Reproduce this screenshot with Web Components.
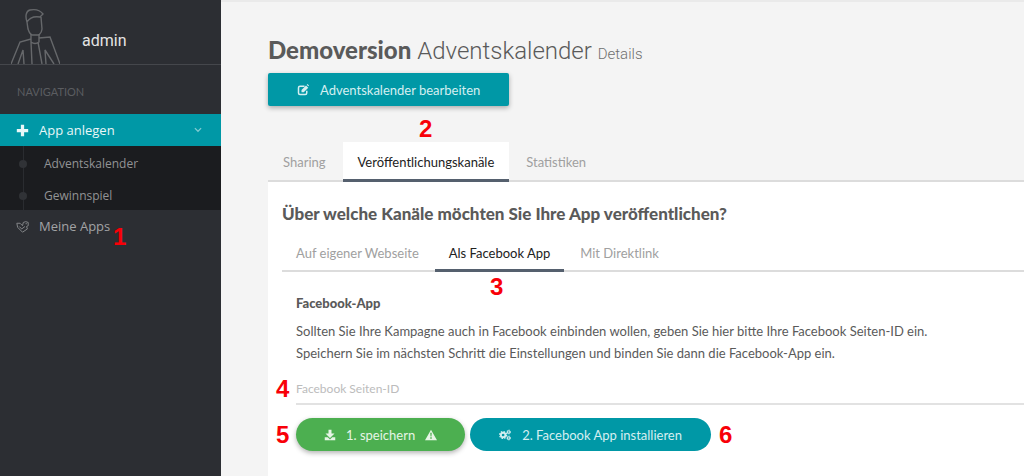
<!DOCTYPE html>
<html lang="de">
<head>
<meta charset="utf-8">
<meta name="viewport" content="width=device-width, initial-scale=1">
<title>Adventskalender</title>
<style>
  :root {
    --teal: #0098a6;
    --green: #4caf50;
    --slate: #55606e;
    --dark: #2c2e33;
    --darker: #1b1c1f;
    --text: #5a5a5a;
    --muted: #a0a0a0;
    --line: #dcdcdc;
  }

  body {
    margin: 0;
    background: #f4f4f4;
    color: var(--text);
    font-family: Lato, sans-serif;
    font-size: 13px;
  }
</style>
</head>
<body>
<admin-page></admin-page>

<script>
const define = (name, html) => {
  const template = document.createElement('template')
  template.innerHTML = html
  customElements.define(name, class extends HTMLElement {
    constructor() {
      super()
      this.attachShadow({ mode: 'open' }).append(template.content.cloneNode(true))
    }
  })
}

const icons = {
  plus: '<path d="M6 1h4v5h5v4h-5v5H6v-5H1V6h5z"/>',
  chevron: '<path d="M3 5l5 5 5-5" fill="none" stroke="currentColor" stroke-width="2"/>',
  tag: '<path d="M1 4l4 0 3 3 1-4 3-1 3 1 0 4-2 1 1 3-6 4-6-6z M4 8l3 3 4-3" fill="none" stroke="currentColor" stroke-width="1.2"/><circle cx="12.500" cy="4.500" r=".8"/>',
  edit: '<path d="M10 3H4Q2 3 2 5v7q0 2 2 2h7q2 0 2-2V9" fill="none" stroke="currentColor" stroke-width="2"/><path d="M6 8l6-6 3 3-6 6H6z"/><path d="M13 1l1-1 2 2-1 1z"/>',
  download: '<path d="M6 1h4v5h4l-6 6-6-6h4z"/><path d="M1 11h4l3 3 3-3h4v4H1z"/>',
  warning: '<path fill-rule="evenodd" d="M8 1l8 14H0zM7 5l.4 5h1.200L9 5zM7 11v2h2v-2z"/>',
  cogs: '<g fill="none" stroke="currentColor"><circle cx="5.500" cy="8" r="3" stroke-width="2.400"/><circle cx="5.500" cy="8" r="4.700" stroke-width="1.600" stroke-dasharray="2 1.690"/><circle cx="13" cy="4" r="1.700" stroke-width="1.500"/><circle cx="13" cy="4" r="2.700" stroke-width="1" stroke-dasharray="1.400 1.430"/><circle cx="13" cy="12" r="1.700" stroke-width="1.500"/><circle cx="13" cy="12" r="2.700" stroke-width="1" stroke-dasharray="1.400 1.430"/></g>'
}

class AppIcon extends HTMLElement {
  constructor() {
    super()
    this.attachShadow({ mode: 'open' })
  }

  connectedCallback() {
    this.shadowRoot.innerHTML = `
      <style>
        :host { display: inline-flex; width: 12px; height: 12px; flex: none; }
        svg { width: 100%; height: 100%; fill: currentColor; }
      </style>
      <svg viewBox="0 0 16 16" aria-hidden="true">${icons[this.getAttribute('name')]}</svg>
    `
  }
}

customElements.define('app-icon', AppIcon)

define('step-mark', `
  <style>
    :host {
      color: #f80008;
      font: bold 24px/24px "Liberation Sans", sans-serif;
    }
  </style>
  <slot></slot>
`)

define('user-badge', `
  <style>
    :host {
      display: flex;
      align-items: flex-end;
      gap: 22px;
      height: 64px;
      padding-left: 11px;
      border-bottom: 1px solid #45474c;
      color: #e4e4e4;
      font: 16px/20px Roboto, sans-serif;
    }
    svg {
      width: 49px;
      height: 56px;
      fill: none;
      stroke: #66686b;
      stroke-width: 1.4;
    }
    span { padding-bottom: 13px; }
  </style>
  <svg viewBox="0 0 49 56" aria-hidden="true">
    <path d="M16 14C14 8 15 3 19 2c5-1 10 0 13 4l-3 3c-6-1-10 0-13 5zM16 14l1 7c1 3 2 5 4 6h7c2-2 3-4 3-6L30 9"/>
    <path d="M20 26v8q4 3 8 0v-8M20 31L9 34 0 56M28 30l11-1 10 27M20 34l1 22M27 34l4 22M7 56l5-14 1 14M35 56l-1-14 9 14"/>
  </svg>
  <span><slot></slot></span>
`)

define('nav-item', `
  <style>
    :host { display: block; }
    a {
      display: flex;
      align-items: center;
      box-sizing: border-box;
      gap: 10px;
      height: 32px;
      padding: 0 18px 0 16px;
      color: #a2a3a5;
      text-decoration: none;
    }
    span { flex: 1; }
    :host([active]) a { background: var(--teal); color: #e9f7f8; }
    :host([sub]) a {
      gap: 17px;
      padding: 4px 18px 0 19px;
      color: #929395;
      font-size: 12px;
    }
    :host([sub]) a::before {
      content: "";
      width: 8px;
      height: 8px;
      border-radius: 50%;
      background: #303236;
    }
  </style>
  <a href="#"><slot name="icon"></slot><span><slot></slot></span><slot name="end"></slot></a>
`)

define('side-bar', `
  <style>
    :host {
      display: block;
      position: relative;
      background: var(--dark);
      font: 13px/20px "Open Sans", sans-serif;
    }
    h2 {
      margin: 0;
      padding: 17px 17px 12px;
      color: #5b5d61;
      font: 11px/20px Lato, sans-serif;
    }
    .sub {
      background: linear-gradient(#2a2c30, #2a2c30) 23px 0 / 1px 100% no-repeat var(--darker);
    }
    nav app-icon { width: 13px; height: 13px; }
    app-icon[name="tag"] { color: #85878a; }
    app-icon[name="chevron"] { width: 10px; height: 10px; color: #80cbd2; }
    step-mark {
      position: absolute;
      top: 225px;
      left: 113px;
    }
  </style>
  <user-badge>admin</user-badge>
  <h2>NAVIGATION</h2>
  <nav>
    <nav-item active><app-icon slot="icon" name="plus"></app-icon>App anlegen<app-icon slot="end" name="chevron"></app-icon></nav-item>
    <div class="sub">
      <nav-item sub>Adventskalender</nav-item>
      <nav-item sub>Gewinnspiel</nav-item>
    </div>
    <nav-item><app-icon slot="icon" name="tag"></app-icon>Meine Apps</nav-item>
  </nav>
  <step-mark>1</step-mark>
`)

define('action-button', `
  <style>
    :host { display: inline-flex; }
    button {
      display: flex;
      align-items: center;
      gap: 11px;
      height: 33px;
      padding: 0 29px;
      border: 0;
      border-radius: 2px;
      background: var(--teal);
      color: #d5eff1;
      font: 13px/20px Lato, sans-serif;
      cursor: pointer;
    }
    :host([raised]) button { box-shadow: 0 2px 5px rgba(0, 0, 0, .3); }
    :host([round]) button { border-radius: 17px; }
    :host([green]) button {
      gap: 10px;
      padding: 0 28px;
      background: var(--green);
      color: #e6f5e6;
    }
  </style>
  <button type="button"><slot></slot></button>
`)

define('tab-item', `
  <style>
    :host { display: block; }
    button {
      height: 100%;
      padding: 0 var(--tab-pad, 14px);
      border: 0;
      background: none;
      color: var(--muted);
      font: 13px/20px Lato, sans-serif;
      cursor: pointer;
    }
    :host([active]) button {
      background: #fff;
      color: #222;
      box-shadow: inset 0 -3px var(--slate);
    }
  </style>
  <button type="button" role="tab"><slot></slot></button>
`)

define('tab-bar', `
  <style>
    :host {
      display: flex;
      gap: 2px;
      height: 40px;
      box-shadow: inset 0 -2px var(--line);
    }
  </style>
  <slot></slot>
`)

define('facebook-form', `
  <style>
    :host { display: block; padding: 21px 0 14px 14px; }
    h4 { margin: 0; font: 900 13px/20px Lato, sans-serif; }
    p { margin: 7px 0 9px; line-height: 22px; }
    .field { position: relative; }
    .field step-mark { position: absolute; top: 4px; left: -20px; }
    input {
      display: block;
      box-sizing: border-box;
      width: 100%;
      height: 32px;
      padding: 0;
      border: 0;
      border-bottom: 2px solid #e2e2e2;
      background: none;
      font: 12px/20px Lato, sans-serif;
    }
    input::placeholder { color: #bcbcbc; opacity: 1; }
    .actions {
      position: relative;
      display: flex;
      align-items: center;
      gap: 5px;
      margin-top: 13px;
    }
    .actions step-mark:first-child { position: absolute; left: -20px; }
    .actions step-mark:last-child { margin-left: 3px; }
  </style>
  <h4>Facebook-App</h4>
  <p>Sollten Sie Ihre Kampagne auch in Facebook einbinden wollen, geben Sie hier bitte Ihre Facebook Seiten-ID ein.<br>Speichern Sie im nächsten Schritt die Einstellungen und binden Sie dann die Facebook-App ein.</p>
  <div class="field">
    <step-mark>4</step-mark>
    <input type="text" aria-label="Facebook Seiten-ID" placeholder="Facebook Seiten-ID">
  </div>
  <div class="actions">
    <step-mark>5</step-mark>
    <action-button round green raised><app-icon name="download"></app-icon>1. speichern<app-icon name="warning"></app-icon></action-button>
    <action-button round><app-icon name="cogs"></app-icon>2. Facebook App installieren</action-button>
    <step-mark>6</step-mark>
  </div>
`)

define('channel-panel', `
  <style>
    :host {
      display: block;
      flex: 1;
      padding: 20px 0 0 14px;
      background: #fff;
    }
    h3 { margin: 0 0 8px; font: 900 17px/24px Lato, sans-serif; }
    .tabs { position: relative; }
    tab-bar { height: 38px; }
    .tabs step-mark { position: absolute; top: 41px; left: 208px; }
  </style>
  <h3>Über welche Kanäle möchten Sie Ihre App veröffentlichen?</h3>
  <div class="tabs">
    <tab-bar role="tablist">
      <tab-item>Auf eigener Webseite</tab-item>
      <tab-item active>Als Facebook App</tab-item>
      <tab-item>Mit Direktlink</tab-item>
    </tab-bar>
    <step-mark>3</step-mark>
  </div>
  <facebook-form></facebook-form>
`)

define('admin-page', `
  <style>
    :host {
      display: grid;
      grid-template-columns: 221px 1fr;
      min-height: 100vh;
    }
    main {
      display: flex;
      flex-direction: column;
      padding: 33px 0 0 47px;
      border-top: 2px solid #eaeaea;
    }
    h1 {
      margin: 0 0 4px;
      font: 300 24px/30px Roboto, sans-serif;
    }
    h1 b { font-family: Lato, sans-serif; font-weight: 900; }
    h1 small { color: #707070; font-size: 15px; }
    .tabs { --tab-pad: 15px; position: relative; margin-top: 36px; }
    .tabs step-mark { position: absolute; top: -25px; left: 151px; }
  </style>
  <side-bar></side-bar>
  <main>
    <h1><b>Demoversion</b> Adventskalender <small>Details</small></h1>
    <div><action-button raised><app-icon name="edit"></app-icon>Adventskalender bearbeiten</action-button></div>
    <div class="tabs">
      <tab-bar role="tablist">
        <tab-item>Sharing</tab-item>
        <tab-item active>Veröffentlichungskanäle</tab-item>
        <tab-item>Statistiken</tab-item>
      </tab-bar>
      <step-mark>2</step-mark>
    </div>
    <channel-panel></channel-panel>
  </main>
`)
</script>
</body>
</html>
